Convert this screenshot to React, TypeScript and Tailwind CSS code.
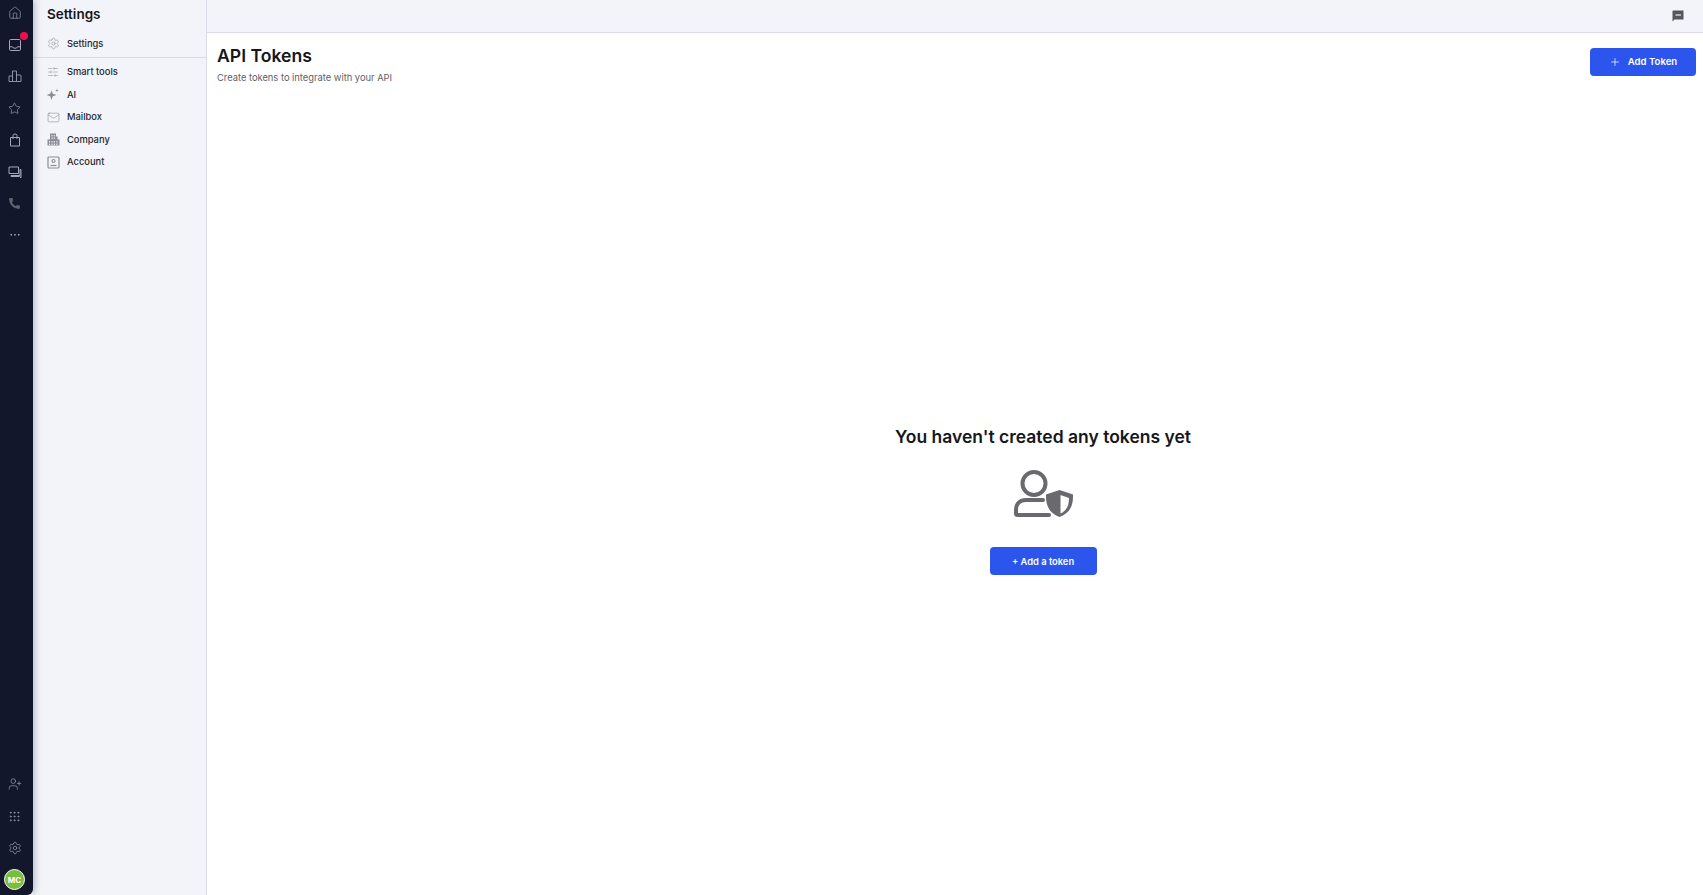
import { House, Star, Phone, UserPlus, Grip, Settings, SlidersHorizontal, Mail, Plus } from 'lucide-react';

function InboxIcon() {
  return (
    <svg width="14" height="14" viewBox="0 0 14 14" fill="none" stroke="currentColor" strokeWidth="1" strokeLinejoin="round">
      <rect x="1.500" y="1.500" width="11" height="11" rx="1.200" />
      <path d="M1.500 8.800h3q.4 1.500 2.500 1.500t2.500-1.500h3" />
    </svg>
  );
}

function ChartIcon() {
  return (
    <svg width="14" height="14" viewBox="0 0 14 14" fill="none" stroke="currentColor" strokeWidth="1" strokeLinejoin="round">
      <path d="M1 12.500V7h3.500v5.500M4.500 12.500V2h4v10.500M8.500 12.500V6h3.700q.8 0 .8.8v5.700H1" />
    </svg>
  );
}

function BagIcon() {
  return (
    <svg width="14" height="14" viewBox="0 0 14 14" fill="none" stroke="currentColor" strokeWidth="1" strokeLinejoin="round">
      <path d="M2.500 4.500h9v8.500h-9z" />
      <path d="M5 6V2.500q0-1.500 2-1.500t2 1.500V6" />
    </svg>
  );
}

function ChatsIcon() {
  return (
    <svg width="14" height="14" viewBox="0 0 14 14" fill="none" stroke="currentColor" strokeWidth="1">
      <path d="M1 2h9.500v6.500H1z" strokeLinejoin="round" />
      <path d="M3 10.500h9V4.500h1V12.800l-1.500-1.300H3z" strokeLinejoin="round" />
    </svg>
  );
}

function DotsIcon() {
  return (
    <svg width="10" height="4" viewBox="0 0 10 4" fill="currentColor">
      <rect x="0.500" y="1" width="1.500" height="1.500" />
      <rect x="4.200" y="1" width="1.500" height="1.500" />
      <rect x="7.900" y="1" width="1.500" height="1.500" />
    </svg>
  );
}

function SparkIcon() {
  return (
    <svg width="14" height="14" viewBox="0 0 14 14" fill="currentColor">
      <path d="M5.500 2.500l1.300 3.200l3.700 1.300l-3.700 1.300l-1.300 3.700l-1.300-3.700l-3.700-1.300l3.700-1.300z" />
      <path d="M11 .800c.2 1.200.6 1.500 1.700 1.700c-1.100.2-1.500.6-1.700 1.700c-.2-1.100-.6-1.500-1.700-1.700c1.100-.2 1.500-.5 1.700-1.700z" />
    </svg>
  );
}

function BuildingIcon() {
  return (
    <svg width="13" height="13" viewBox="0 0 13 13" fill="currentColor">
      <path d="M3 .500h6v3h1.500v3h2v6H.500v-6H3z" />
      <path d="M4.500 2h1v1.400h-1zM6.800 2h1v1.400h-1zM4.500 4.600h1V6h-1zM6.800 4.600h1V6h-1zM2 8h1v1.400H2zM4.500 8h1v1.400h-1zM6.800 8h1v1.400h-1zM9.400 8h1v1.400h-1zM2 10.500h1v1.400H2zM4.500 10.500h1v1.400h-1zM6.800 10.500h1v1.400h-1zM9.400 10.500h1v1.400h-1z" fill="#f3f4fa" />
    </svg>
  );
}

function AccountIcon() {
  return (
    <svg width="13" height="13" viewBox="0 0 13 13" fill="none" stroke="currentColor" strokeWidth="1.200">
      <rect x="1" y="1" width="11" height="11" rx="1" />
      <circle cx="6.500" cy="5" r="1.500" />
      <path d="M3.500 9.500h6" />
    </svg>
  );
}

function FeedbackIcon() {
  return (
    <svg width="12" height="12" viewBox="0 0 12 12">
      <path d="M1 .500h10.500v9H2.500L.500 11.500V1z" fill="#55565c" />
      <path d="M3.500 5h5.500" stroke="#fff" strokeWidth="1.100" />
    </svg>
  );
}

function UserShieldIcon() {
  return (
    <svg width="59" height="47" viewBox="0 0 59 47" fill="none">
      <circle cx="20" cy="13.500" r="11.500" stroke="#69696e" strokeWidth="4" />
      <path d="M29 30H12C6 30 2 34 2 40v3.500q0 1.500 1.500 1.500H35" stroke="#69696e" strokeWidth="4" strokeLinecap="round" />
      <path d="M45.500 20L59 24.500c.3 10-2 18-13.500 22.500c-11.500-4.500-13.800-12.500-13.500-22.500z" fill="#69696e" />
      <path d="M46.500 25l8.500 3c0 7-2 12.500-8.500 15.500z" fill="#fff" />
    </svg>
  );
}

const railTop = [
  { icon: <House size={14} strokeWidth={1.100} />, color: 'text-[#a6a8b8]' },
  { icon: <InboxIcon />, color: 'text-[#a6a8b8]', dot: true },
  { icon: <ChartIcon />, color: 'text-[#8f91a2]' },
  { icon: <Star size={13} strokeWidth={1.200} />, color: 'text-[#a6a8b8]' },
  { icon: <BagIcon />, color: 'text-[#a6a8b8]' },
  { icon: <ChatsIcon />, color: 'text-[#a6a8b8]' },
  { icon: <Phone size={13} strokeWidth={0} fill="currentColor" />, color: 'text-[#62646f]' },
  { icon: <DotsIcon />, color: 'text-[#a6a8b8]' },
];

const railBottom = [
  <UserPlus size={14} strokeWidth={1.100} />,
  <Grip size={13} strokeWidth={1.200} />,
  <Settings size={14} strokeWidth={1.100} />,
];

const navItems = [
  { label: 'Smart tools', icon: <SlidersHorizontal size={12} strokeWidth={1.100} /> },
  { label: 'AI', icon: <SparkIcon /> },
  { label: 'Mailbox', icon: <Mail size={13} strokeWidth={1.100} /> },
  { label: 'Company', icon: <BuildingIcon /> },
  { label: 'Account', icon: <AccountIcon /> },
];

export default function App() {
  return (
    <div className="flex h-[895px] w-[1703px] overflow-hidden bg-white font-['Inter',sans-serif] text-[#16171a]">
      <aside className="z-10 flex w-[33px] shrink-0 flex-col items-center justify-between rounded-br-md bg-[#13172b] pb-[5px] pr-[4px] shadow-[2px_0_6px_rgba(20,24,50,0.25)]">
        <div className="-mt-[3px] flex flex-col items-center">
          {railTop.map((r, i) => (
            <div key={i} className={`relative flex h-[31.800px] w-[29px] items-center justify-center ${r.color}`}>
              {r.icon}
              {r.dot && <span className="absolute left-[20px] top-[3px] h-2 w-2 rounded-full bg-[#f20d4f]" />}
            </div>
          ))}
        </div>
        <div className="flex flex-col items-center">
          {railBottom.map((icon, i) => (
            <div key={i} className="flex h-[32px] w-[29px] items-center justify-center text-[#a6a8b8]">{icon}</div>
          ))}
          <div className="mt-[5px] flex h-[21px] w-[21px] items-center justify-center rounded-full border border-white bg-[#7cbd3f] text-[8px] font-bold text-white">MC</div>
        </div>
      </aside>

      <nav className="w-[174px] shrink-0 border-r border-[#d9dbeb] bg-[#f3f4fa]">
        <h2 className="pl-[14px] pt-[4px] text-[13.500px] leading-[20px] font-semibold">Settings</h2>
        <div className="flex h-[34px] items-center border-b border-[#d9dbeb] pl-[14px] pt-[6px] text-[9.330px] font-medium text-[#26272c]">
          <span className="flex w-[12px] justify-center text-[#8c8d96] [&>svg]:shrink-0"><Settings size={13} strokeWidth={1.100} /></span>
          <span className="ml-[8px]">Settings</span>
        </div>
        <ul className="pt-[3px]">
          {navItems.map((item) => (
            <li key={item.label} className="flex h-[22.500px] items-center pl-[14px] text-[9.330px] font-medium text-[#26272c]">
              <span className="flex w-[12px] justify-center text-[#8c8d96] [&>svg]:shrink-0">{item.icon}</span>
              <span className="ml-[8px]">{item.label}</span>
            </li>
          ))}
        </ul>
      </nav>

      <main className="flex min-w-0 flex-1 flex-col">
        <header className="flex h-[33px] shrink-0 items-center justify-end border-b border-[#d9dbeb] bg-[#f3f4fa] pr-[19px]">
          <FeedbackIcon />
        </header>
        <div className="flex items-start justify-between pl-[10px] pr-[7px] pt-[11px]">
          <div>
            <h1 className="text-[17.600px] leading-[24px] font-semibold">API Tokens</h1>
            <p className="mt-[3px] text-[9.330px] leading-[14px] text-[#5e5f66]">Create tokens to integrate with your API</p>
          </div>
          <button className="mt-[4px] flex h-[28px] w-[106px] items-center justify-center gap-[7px] rounded-[4px] bg-[#2b55ec] text-[9.600px] font-semibold text-white">
            <Plus size={12} strokeWidth={1.400} />
            Add Token
          </button>
        </div>
        <div className="flex flex-col items-center pl-[176px] pt-[340px]">
          <h3 className="text-[17.500px] leading-[24px] font-semibold">You haven't created any tokens yet</h3>
          <div className="mt-[21px] leading-none"><UserShieldIcon /></div>
          <button className="mt-[30px] h-[28px] w-[107px] rounded-[4px] bg-[#2b55ec] pt-px text-[9.330px] font-semibold text-white">+ Add a token</button>
        </div>
      </main>
    </div>
  );
}
